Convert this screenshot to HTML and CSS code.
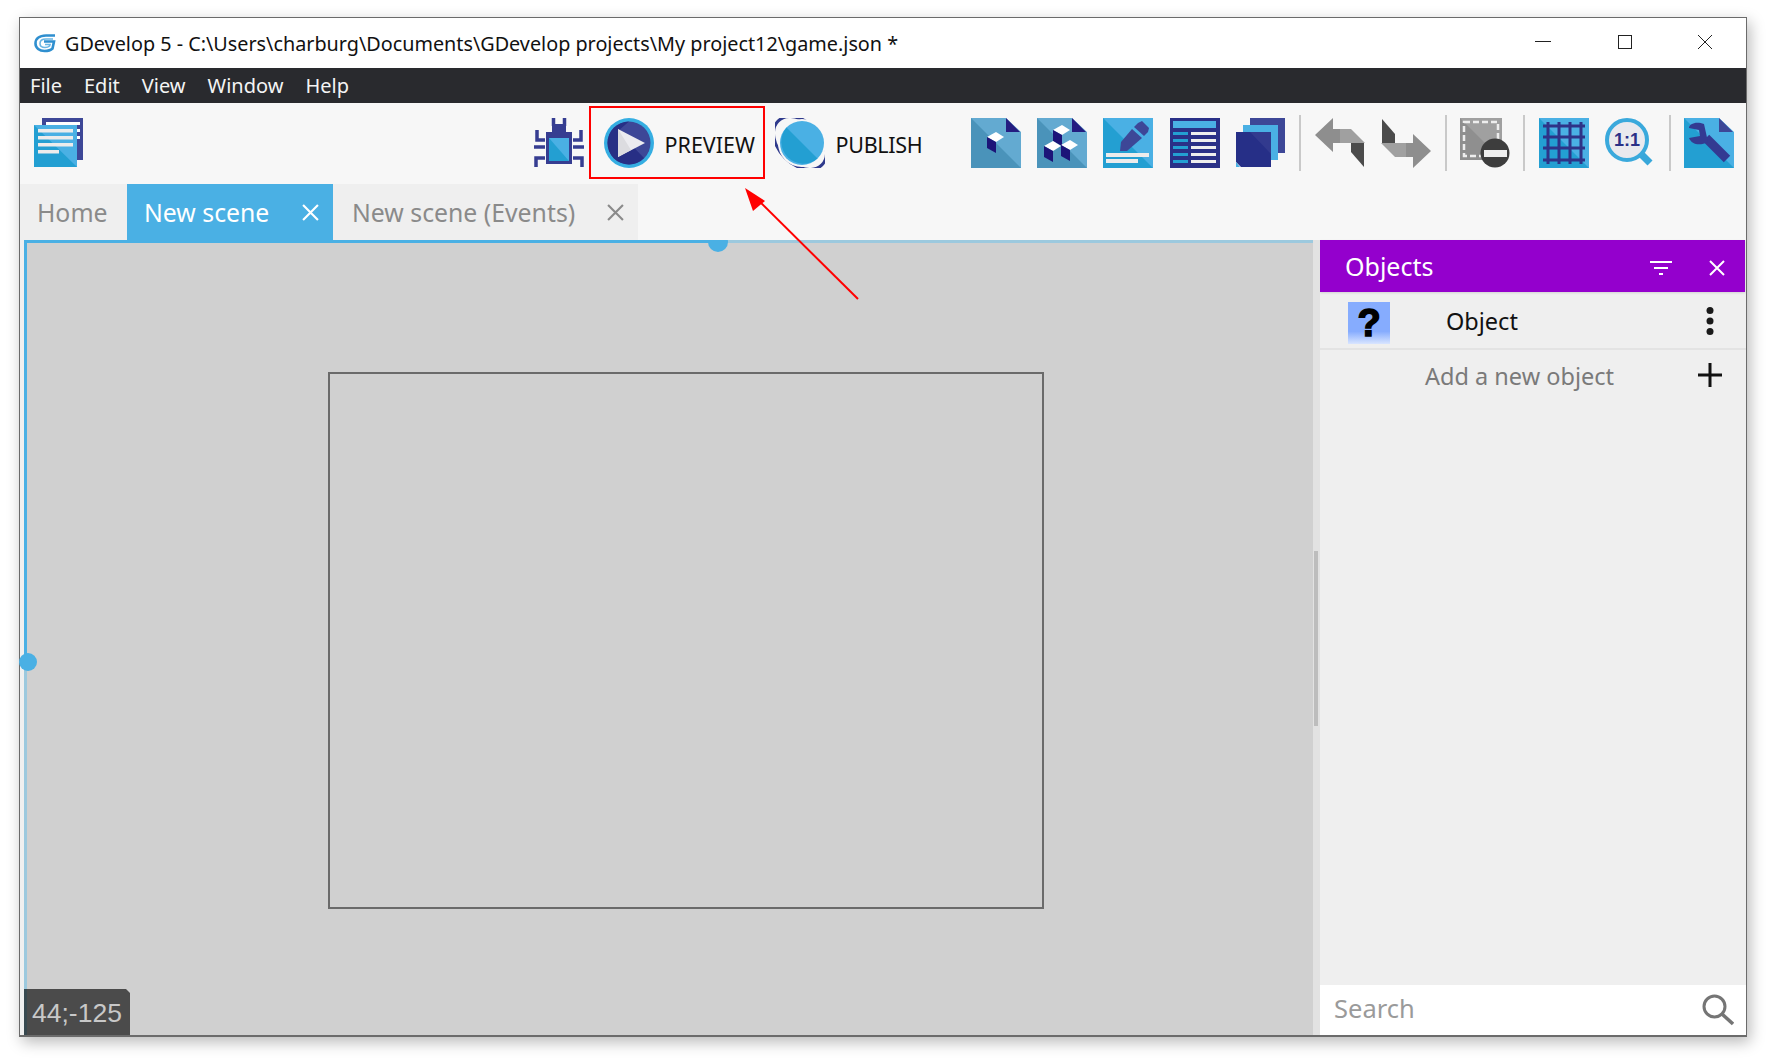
FILE: index.html
```html
<!DOCTYPE html>
<html lang="en">
<head>
<meta charset="utf-8">
<title>GDevelop 5</title>
<link rel="stylesheet" href="styles.css">
</head>
<body>
<svg class="defs" width="0" height="0">
  <defs>
    <g id="cube"><polygon points="16,19 25,14 33,19 25,24" fill="#fff"/><polygon points="16,19 25,24 25,35 16,30" fill="#1c1478"/></g>
    <g id="arrow">
      <polygon points="0,17 18,0 18,11 25,11 25,25 18,25 18,34" fill="#8e8e8e"/>
      <polygon points="25,11 36,11 50,25 25,25" fill="#a0a0a0"/>
      <polygon points="36,25 49,25 49,49 36,34" fill="#4b4b4b"/>
    </g>
  </defs>
</svg>
<div class="window">
  <header class="titlebar">
    <svg class="logo" viewBox="0 0 24 20"><path d="M22 2.500H13C6 2.500 2.500 6 2.500 10.500 2.500 15 6.500 18 11.500 18 15 18 18 17 19.500 15.500L21 8.500H11" fill="none" stroke="#2f8fcf" stroke-width="2.600"/><path d="M20 6H13C9 6 7 8 7 10.500 7 13 9 14.500 12 14.500 14 14.500 15.500 14 16.500 13L17 11.500H12" fill="none" stroke="#6bb6e4" stroke-width="1.600"/></svg>
    <span class="title-text">GDevelop 5 - C:\Users\charburg\Documents\GDevelop projects\My project12\game.json *</span>
    <div class="win-controls">
      <svg class="win-btn" viewBox="0 0 16 16"><path d="M0 7.500H16" stroke="#222" fill="none"/></svg>
      <svg class="win-btn" viewBox="0 0 16 16"><rect x="1.500" y="1.500" width="13" height="13" stroke="#222" fill="none"/></svg>
      <svg class="win-btn win-close" viewBox="0 0 16 16"><path d="M1 1L15 15M15 1L1 15" stroke="#222" fill="none"/></svg>
    </div>
  </header>
  <nav class="menubar">
    <span>File</span><span>Edit</span><span>View</span><span>Window</span><span>Help</span>
  </nav>
  <div class="toolbar">
    <svg class="icon" viewBox="0 0 50 50">
      <rect x="8" width="41" height="42" fill="#3d4797"/>
      <rect x="12" y="4" width="34" height="3" fill="#fff"/><rect x="43" y="11" width="3" height="3" fill="#fff"/><rect x="43" y="18" width="3" height="3" fill="#fff"/>
      <rect y="7" width="43" height="42" fill="#4ab0e4"/>
      <polygon points="0,7 43,49 0,49" fill="#239fd2"/>
      <rect x="4" y="11" width="35" height="3.500" fill="#ececec"/><rect x="4" y="18" width="35" height="3.500" fill="#ececec"/><rect x="4" y="25" width="35" height="3.500" fill="#ececec"/><rect x="4" y="32" width="21" height="3.500" fill="#ececec"/>
    </svg>
    <div class="spacer"></div>
    <svg class="icon" viewBox="0 0 50 50">
      <g fill="none" stroke="#363d91" stroke-width="3.500">
        <path d="M11 22H3V12M39 22H47V12M0 29H11M39 29H50M11 40H2V49M39 40H48V49"/>
        <path d="M19.500 0V8M30.500 0V8"/>
      </g>
      <path d="M18 6H32V14H38V46H12V14H18Z" fill="#363d91"/>
      <rect x="15" y="20" width="20" height="23" fill="#4ab0e4"/>
      <polygon points="15,20 35,43 15,43" fill="#239fd2"/>
    </svg>
    <button class="tool-btn preview">
      <svg class="icon" viewBox="0 0 50 50">
        <circle cx="25" cy="25" r="25" fill="#35aee2"/>
        <circle cx="25" cy="25" r="21.500" fill="#3d4797"/>
        <path d="M25 3.500A21.500 21.500 0 0 0 25 46.500A21.500 21.500 0 0 0 40 40L14 13Z" fill="#272f85"/>
        <polygon points="14,11 41,25 14,39" fill="#ececf0"/>
        <polygon points="14,11 27,32 14,39" fill="#dcdce0"/>
      </svg>
      <span class="btn-label">PREVIEW</span>
    </button>
    <button class="tool-btn publish">
      <svg class="icon" viewBox="0 0 50 50">
        <ellipse cx="25" cy="25" rx="31" ry="21" transform="rotate(45 25 25)" fill="none" stroke="#2f3a8c" stroke-width="3"/>
        <circle cx="27" cy="25" r="24" fill="#f7f7f7"/>
        <circle cx="27" cy="25" r="22" fill="#4ab0e4"/>
        <path d="M11.500 9.500A22 22 0 0 0 42.500 40.500Z" fill="#239fd2"/>
      </svg>
      <span class="btn-label publish-label">PUBLISH</span>
    </button>
    <div class="tools">
      <svg class="icon" viewBox="0 0 50 50">
        <polygon points="0,0 35,0 50,14 50,50 0,50" fill="#63aad1"/>
        <polygon points="0,0 50,50 0,50" fill="#4a93ba"/>
        <polygon points="35,0 49,14 35,14" fill="#241c80"/>
        <use href="#cube"/>
      </svg>
      <svg class="icon" viewBox="0 0 50 50">
        <polygon points="0,0 35,0 50,14 50,50 0,50" fill="#63aad1"/>
        <polygon points="0,0 50,50 0,50" fill="#4a93ba"/>
        <polygon points="35,0 49,14 35,14" fill="#241c80"/>
        <use href="#cube" y="-7"/><use href="#cube" x="-9" y="9"/><use href="#cube" x="8" y="8"/>
      </svg>
      <svg class="icon" viewBox="0 0 50 50">
        <rect width="50" height="50" fill="#4ab0e4"/>
        <polygon points="0,0 50,50 0,50" fill="#239fd2"/>
        <polygon points="35,5 39,3 46,10 45,14 41,18 31,9" fill="#3d4797"/>
        <polygon points="29,11 39,20 24,33 17,33 18,24" fill="#3d4797"/>
        <rect x="3" y="35" width="43" height="4" fill="#ececec"/><rect x="3" y="41" width="32" height="4" fill="#ececec"/>
      </svg>
      <svg class="icon" viewBox="0 0 50 50">
        <rect width="50" height="50" fill="#2a3087"/>
        <rect x="3" y="3" width="43" height="7" fill="#4ab0e4"/>
        <g fill="#239fd2"><rect x="3" y="14" width="15" height="3"/><rect x="3" y="21" width="15" height="3"/><rect x="3" y="28" width="15" height="3"/><rect x="3" y="35" width="15" height="3"/><rect x="3" y="42" width="15" height="3"/></g>
        <g fill="#eee"><rect x="21" y="14" width="25" height="3"/><rect x="21" y="21" width="25" height="3"/><rect x="21" y="28" width="25" height="3"/><rect x="21" y="35" width="25" height="3"/><rect x="21" y="42" width="25" height="3"/></g>
      </svg>
      <svg class="icon" viewBox="0 0 50 50">
        <rect x="14" width="35" height="35" fill="#3d4797"/>
        <rect x="7" y="7" width="35" height="35" fill="#4ab0e4"/>
        <polygon points="0,14 35,14 35,49 5,49 0,44" fill="#262f87"/>
        <polygon points="4,49 0,44 0,49" fill="#4ab0e4"/>
        <polygon points="14,14 35,14 35,36" fill="#323a8e"/>
      </svg>
      <i class="sep"></i>
      <svg class="icon" viewBox="0 0 50 50"><use href="#arrow"/></svg>
      <svg class="icon" viewBox="0 0 50 50"><use href="#arrow" transform="rotate(180 25 25)"/></svg>
      <i class="sep"></i>
      <svg class="icon" viewBox="0 0 50 50">
        <rect width="42" height="42" fill="#a0a0a0"/>
        <polygon points="0,0 42,42 0,42" fill="#8f8f8f"/>
        <rect x="4" y="4" width="34" height="34" fill="none" stroke="#eee" stroke-width="2.500" stroke-dasharray="6 3"/>
        <circle cx="35" cy="35" r="14.500" fill="#3d3d3d"/>
        <rect x="24" y="32" width="23" height="7" fill="#eee"/>
      </svg>
      <i class="sep"></i>
      <svg class="icon" viewBox="0 0 50 50">
        <rect width="50" height="50" fill="#4ab0e4"/>
        <polygon points="0,0 50,50 0,50" fill="#239fd2"/>
        <path d="M9 4V46M20 4V46M31 4V46M42 4V46M4 8H46M4 19H46M4 30H46M4 42H46" stroke="#2e3387" stroke-width="3" fill="none"/>
      </svg>
      <svg class="icon" viewBox="0 0 50 50">
        <path d="M37 37L45 45" stroke="#38a7da" stroke-width="7" fill="none"/>
        <circle cx="22" cy="22" r="20" fill="#e9e9ee" stroke="#3aa9dc" stroke-width="4"/>
        <text class="zoom-label" x="22" y="28" text-anchor="middle">1:1</text>
      </svg>
      <i class="sep"></i>
      <svg class="icon" viewBox="0 0 50 50">
        <polygon points="0,0 35,0 50,14 50,50 0,50" fill="#4ab0e4"/>
        <polygon points="0,0 50,50 0,50" fill="#239fd2"/>
        <polygon points="35,0 49,14 35,14" fill="#3d4797"/>
        <path d="M22 20L43 41" stroke="#333a92" stroke-width="9" fill="none"/>
        <path d="M20 6C12 3 5 6 5 10L15 12 16 18 5 20C8 27 16 28 24 24Z" fill="#333a92"/>
      </svg>
    </div>
  </div>
  <div class="tabs">
    <div class="tab home">Home</div>
    <div class="tab active">New scene<svg class="tab-x" viewBox="0 0 16 16"><path d="M1 1L15 15M15 1L1 15" stroke="currentColor" stroke-width="2" fill="none"/></svg></div>
    <div class="tab events">New scene (Events)<svg class="tab-x" viewBox="0 0 16 16"><path d="M1 1L15 15M15 1L1 15" stroke="currentColor" stroke-width="2" fill="none"/></svg></div>
  </div>
  <main class="workspace">
    <section class="canvas">
      <div class="scene-frame"></div>
      <i class="sel-top"></i><i class="sel-left"></i>
      <i class="handle handle-top"></i><i class="handle handle-left"></i>
      <div class="coords">44;-125</div>
    </section>
    <div class="divider"><i class="divider-grip"></i></div>
    <aside class="panel">
      <div class="panel-head">
        <span>Objects</span>
        <svg class="head-filter" viewBox="0 0 22 14"><path d="M0 1H22M4 7H18M9 13H13" stroke="#fff" stroke-width="2" fill="none"/></svg>
        <svg class="head-close" viewBox="0 0 16 16"><path d="M1 1L15 15M15 1L1 15" stroke="#fff" stroke-width="2" fill="none"/></svg>
      </div>
      <div class="row object-row">
        <div class="object-thumb">?</div>
        <span class="object-name">Object</span>
        <svg class="dots" viewBox="0 0 8 28"><circle cx="4" cy="3.500" r="3.500"/><circle cx="4" cy="14" r="3.500"/><circle cx="4" cy="24.500" r="3.500"/></svg>
      </div>
      <div class="row add-row">
        <span class="add-text">Add a new object</span>
        <svg class="plus" viewBox="0 0 24 24"><path d="M12 0V24M0 12H24" stroke="#111" stroke-width="3" fill="none"/></svg>
      </div>
      <div class="panel-fill"></div>
      <div class="search">
        <span>Search</span>
        <svg class="search-icon" viewBox="0 0 32 32"><circle cx="12.500" cy="12.500" r="10.500" fill="none" stroke="#757575" stroke-width="3"/><path d="M20 20L31 30" stroke="#757575" stroke-width="3.500" fill="none"/></svg>
      </div>
    </aside>
  </main>
</div>
<svg class="callout" viewBox="0 0 130 125"><path d="M119 116L14 12" stroke="#f00" stroke-width="2" fill="none"/><polygon points="6,5 26,18 14,28" fill="#f00"/></svg>
</body>
</html>
```
FILE: styles.css
```css
* { box-sizing: border-box; }
html, body { margin: 0; height: 100%; background: #fff; overflow: hidden; }
body { padding: 17px 0 0 19px; font-family: "Noto Sans", "Open Sans", sans-serif; }
.defs { position: absolute; }
.window {
  width: 1728px; height: 1020px; display: flex; flex-direction: column;
  border: 1px solid #6b6b6b; border-bottom-width: 2px; background: #f7f7f7;
  box-shadow: 3px 5px 14px rgba(0, 0, 0, .28);
}
.titlebar { height: 50px; flex: none; display: flex; align-items: center; background: #fff; padding-left: 13px; color: #111; }
.logo { width: 24px; height: 20px; flex: none; margin-right: 8px; }
.title-text { font-size: 19.800px; white-space: nowrap; }
.win-controls { margin-left: auto; display: flex; gap: 66px; padding: 0 33px 2px 0; align-items: center; }
.win-btn { width: 16px; height: 16px; display: block; }
.win-close { margin-left: -2px; }
.menubar { height: 35px; flex: none; background: #292a2e; color: #f4f4f4; display: flex; align-items: center; gap: 22px; padding-left: 10px; font-size: 20px; }
.toolbar { height: 81px; flex: none; display: flex; align-items: center; padding: 0 12px 2px 14px; background: #f7f7f7; }
.icon { width: 50px; height: 50px; flex: none; display: block; }
.spacer { flex: 1; }
.tool-btn { display: flex; align-items: center; padding: 0; margin: 0; background: none; border: 0; font: inherit; font-size: 21.500px; color: #111; flex: none; }
.preview { width: 176px; height: 73px; border: 2px solid #f00; margin-left: 5px; padding-left: 13px; gap: 11px; }
.publish { width: 147px; margin-left: 10px; gap: 11px; }
.btn-label { padding-top: 3px; }
.publish-label { letter-spacing: -.3px; }
.tools { display: flex; align-items: center; margin-left: 49px; gap: 16.400px; }
.sep { width: 2px; height: 56px; background: #c9c9c9; flex: none; margin: 0 -3px; }
.zoom-label { font: 700 18px "Liberation Sans", sans-serif; fill: #2a3087; }
.tabs { height: 56px; flex: none; display: flex; background: #f7f7f7; font-size: 24.800px; color: #8a8a8a; }
.tab { display: flex; align-items: center; background: #efefef; white-space: nowrap; }
.home { width: 107px; padding-left: 17px; }
.active { width: 206px; padding-left: 17px; background: #4ab0e4; color: #fff; }
.events { width: 305px; padding-left: 19px; }
.tab-x { width: 17px; height: 17px; margin-left: auto; margin-right: 14px; flex: none; }
.workspace { flex: 1; display: flex; min-height: 0; background: #efefef; }
.canvas { position: relative; width: 1293px; border-left: 4px solid #f0f0f0; background: #d0d0d0; flex: none; }
.scene-frame { position: absolute; left: 304px; top: 132px; width: 716px; height: 537px; border: 2px solid #6a6a6a; }
.sel-top { position: absolute; left: 0; right: 0; top: 0; height: 3px; background: linear-gradient(to right, #4ab0e4 695px, #9cc9de 695px); }
.sel-left { position: absolute; left: 0; top: 0; bottom: 0; width: 3px; background: linear-gradient(to bottom, #4ab0e4 422px, #9cc9de 422px); }
.handle { position: absolute; border-radius: 50%; background: #4ab0e4; }
.handle-top { left: 684px; top: -8px; width: 20px; height: 20px; clip-path: inset(8px 0 0 0); }
.handle-left { left: -5px; top: 413px; width: 18px; height: 18px; }
.coords {
  position: absolute; left: 0; bottom: 0; width: 106px; height: 46px;
  padding: 8px 0 0 8px; background: rgba(0, 0, 0, .64); color: #c8c8c8;
  font: 26.500px/32px "Liberation Sans", sans-serif;
  clip-path: polygon(0 0, 102px 0, 100% 4px, 100% 100%, 0 100%);
}
.divider { width: 7px; flex: none; background: #e2e2e2; display: flex; align-items: center; position: relative; }
.divider-grip { position: absolute; left: 1px; top: 311px; width: 4px; height: 175px; background: #bdbdbd; }
.panel { flex: 1; display: flex; flex-direction: column; min-width: 0; background: #efefef; }
.panel-head { height: 52px; flex: none; display: flex; align-items: center; padding: 0 20px 0 25px; background: #9400cd; color: #fff; font-size: 25px; box-shadow: 0 1px 2px rgba(0, 0, 0, .12); margin-right: 1px; }
.head-filter { width: 22px; height: 14px; margin: 3px 0 0 auto; flex: none; }
.head-close { width: 16px; height: 16px; margin: 3px 0 0 37px; flex: none; }
.row { flex: none; display: flex; align-items: center; }
.object-row { height: 58px; padding: 6px 0 0 28px; border-bottom: 2px solid #e3e3e3; }
.object-thumb {
  width: 42px; height: 42px; flex: none; text-align: center; color: #000;
  background: linear-gradient(to bottom, #86acfe 70%, #d9e5ff 100%);
  font: 700 38px/42px "Liberation Sans", sans-serif; -webkit-text-stroke: 1.500px #000;
}
.object-name { margin: -4px 0 0 56px; font-size: 23.500px; color: #111; }
.dots { width: 8px; height: 28px; margin: -4px 32px 0 auto; fill: #1a1a1a; }
.add-row { height: 52px; padding: 0 0 0 105px; }
.add-text { font-size: 23.500px; color: #7a7a7a; }
.plus { width: 24px; height: 24px; margin: -2px 24px 0 auto; }
.panel-fill { flex: 1; }
.search { height: 50px; flex: none; display: flex; align-items: center; background: #fff; padding: 0 12px 4px 14px; font-size: 25.500px; color: #9a9a9a; }
.search-icon { width: 32px; height: 32px; margin: 0 0 -4px auto; }
.callout { position: absolute; left: 739px; top: 183px; width: 130px; height: 125px; }
```
